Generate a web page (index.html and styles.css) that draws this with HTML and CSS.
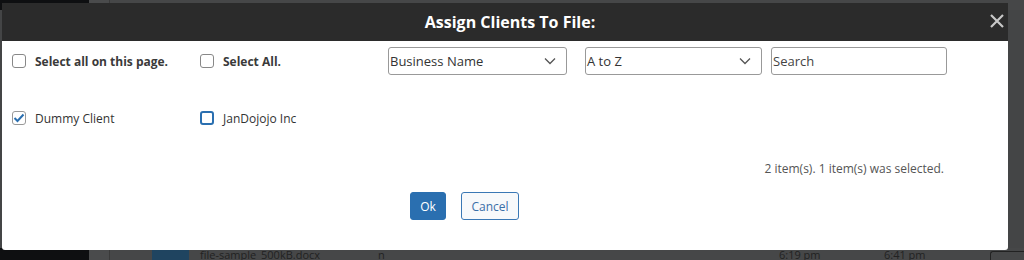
FILE: index.html
```html
<!DOCTYPE html>
<html lang="en">
<head>
    <meta charset="UTF-8">
    <meta name="viewport" content="width=device-width, initial-scale=1.0">
    <title>Assign Clients To File</title>
    <link rel="stylesheet" href="styles.css">
</head>
<body>
    <div class="page">
        <div class="page-top">
            <div class="side"></div>
            <div class="gutter"></div>
            <div class="main"></div>
        </div>
        <div class="page-bottom">
            <div class="side"></div>
            <div class="gutter"></div>
            <div class="main row-file">
                <span class="doc-icon">docx</span>
                <span class="file-name">file-sample_500kB.docx</span>
                <span class="file-owner">n</span>
                <span class="time-a">6:19 pm</span>
                <span class="time-b">6:41 pm</span>
                <span class="row-box"></span>
            </div>
        </div>
    </div>

    <div class="modal">
        <div class="modal-header">
            <h1>Assign Clients To File:</h1>
            <button class="close">
                <svg width="14" height="14" viewBox="0 0 14 14"><path d="M1 1l12 12M13 1L1 13" stroke="#c8c8c8" stroke-width="2.2"/></svg>
            </button>
        </div>
        <div class="modal-body">
            <div class="toolbar">
                <label class="check bold"><input type="checkbox"><span>Select all on this page.</span></label>
                <label class="check bold"><input type="checkbox"><span>Select All.</span></label>
                <div class="filters">
                    <div class="select sort-field">
                        <span>Business Name</span>
                        <svg width="12" height="8" viewBox="0 0 12 8"><path d="M1 1.5l5 5 5-5" fill="none" stroke="#555" stroke-width="1.3"/></svg>
                    </div>
                    <div class="select sort-dir">
                        <span>A to Z</span>
                        <svg width="12" height="8" viewBox="0 0 12 8"><path d="M1 1.5l5 5 5-5" fill="none" stroke="#555" stroke-width="1.3"/></svg>
                    </div>
                    <div class="search">Search</div>
                </div>
            </div>

            <div class="clients">
                <label class="check">
                    <span class="box checked">
                        <svg width="12" height="10" viewBox="0 0 12 10"><path d="M1.5 5l3 3 6-6.5" fill="none" stroke="#2a6fb0" stroke-width="2"/></svg>
                    </span>
                    <span>Dummy Client</span>
                </label>
                <label class="check">
                    <span class="box focus"></span>
                    <span>JanDojojo Inc</span>
                </label>
            </div>

            <div class="status">2 item(s). 1 item(s) was selected.</div>

            <div class="actions">
                <button class="btn-ok">Ok</button>
                <button class="btn-cancel">Cancel</button>
            </div>
        </div>
    </div>
</body>
</html>
```

FILE: styles.css
```css
body {
    margin: 0;
    width: 1024px;
    height: 260px;
    overflow: hidden;
    font-family: 'Open Sans', 'Noto Sans', sans-serif;
    background: #444546;
    position: relative;
}

.page {
    height: 260px;
    display: flex;
    flex-direction: column;
    justify-content: space-between;
}

.page-top,
.page-bottom {
    display: flex;
}

.page-top {
    height: 10px;
}

.page-bottom {
    height: 12px;
}

.side {
    flex-shrink: 0;
    width: 89px;
    background: #0e0f11;
}

.gutter {
    flex-shrink: 0;
    width: 20px;
    background: #4a4b4c;
    border-right: 1px solid #3a3a3a;
}

.main {
    flex: 1;
    min-width: 0;
    background: #464748;
}

.row-file {
    display: flex;
    align-items: center;
    font-size: 11px;
    color: #222;
    white-space: nowrap;
}

.row-file span {
    flex-shrink: 0;
}

.doc-icon {
    margin-left: 42px;
    width: 37px;
    height: 12px;
    background: #1f4460;
    color: #1f4460;
    font-size: 9px;
}

.file-name {
    margin-left: 11px;
    width: 178px;
}

.file-owner {
    width: 401px;
}

.time-a {
    width: 105px;
}

.time-b {
    width: 106px;
}

.row-box {
    width: 40px;
    height: 8px;
    border: 1px solid #222;
    border-right: none;
    border-bottom: none;
    border-radius: 3px 0 0 0;
    align-self: flex-end;
}

/* dialog */
.modal {
    position: absolute;
    left: 2px;
    top: 3px;
    width: 1006px;
    height: 247px;
    background: #fff;
    border-radius: 0 0 3px 3px;
    display: flex;
    flex-direction: column;
}

.modal-header {
    height: 38px;
    background: #2b2b2b;
    display: flex;
    align-items: center;
    justify-content: center;
    position: relative;
}

.modal-header h1 {
    margin: 0;
    color: #fff;
    font-size: 16px;
    font-weight: 700;
    padding-left: 10px;
}

.close {
    position: absolute;
    right: 3px;
    top: 10px;
    width: 16px;
    height: 16px;
    padding: 0;
    background: none;
    border: none;
    display: flex;
    align-items: center;
    justify-content: center;
}

.modal-body {
    padding: 0 10px;
}

.toolbar {
    display: flex;
    align-items: center;
    height: 40px;
}

.check {
    display: flex;
    align-items: center;
    gap: 9px;
    width: 188px;
    font-size: 12px;
    color: #333;
}

.check.bold {
    font-weight: 700;
    color: #3a3a3a;
}

.check input {
    margin: 0;
    width: 14px;
    height: 14px;
    appearance: none;
    border: 1px solid #888;
    border-radius: 3px;
    background: #fff;
}

.filters {
    display: flex;
}

.select,
.search {
    height: 28px;
    border: 1px solid #999;
    border-radius: 3px;
    box-sizing: border-box;
    display: flex;
    align-items: center;
    font-size: 13px;
    color: #333;
    padding-left: 1px;
}

.select {
    justify-content: space-between;
    padding-right: 10px;
}

.sort-field {
    width: 179px;
}

.sort-dir {
    width: 177px;
    margin-left: 18px;
}

.search {
    width: 176px;
    margin-left: 9px;
    color: #444;
}

.clients {
    display: flex;
    align-items: center;
    height: 30px;
    margin-top: 22px;
}

.box {
    width: 14px;
    height: 14px;
    box-sizing: border-box;
    border: 1px solid #999;
    border-radius: 3px;
    display: flex;
    align-items: center;
    justify-content: center;
}

.box.focus {
    border: 2px solid #2a6fb0;
}

.status {
    text-align: right;
    padding-right: 54px;
    font-size: 12px;
    color: #555;
    margin-top: 28px;
    height: 16px;
    line-height: 16px;
}

.actions {
    display: flex;
    gap: 15px;
    margin-top: 15px;
    padding-left: 398px;
}

.actions button {
    height: 28px;
    border-radius: 3px;
    font-family: inherit;
    font-size: 12px;
    padding: 0;
}

.btn-ok {
    width: 36px;
    background: #2a6fb0;
    border: 1px solid #2a6fb0;
    color: #fff;
}

.btn-cancel {
    width: 58px;
    background: #f7f9fb;
    border: 1px solid #3a78b5;
    color: #3a6fa8;
}
```
